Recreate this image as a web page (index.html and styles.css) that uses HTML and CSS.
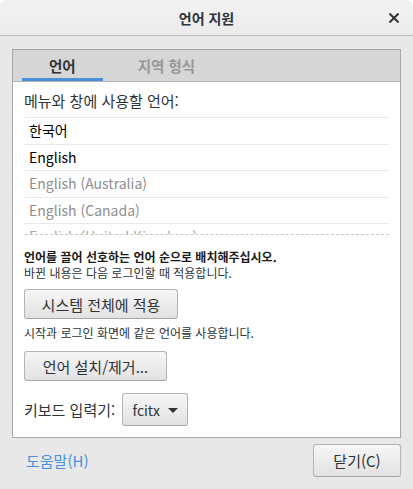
FILE: index.html
```html
<!DOCTYPE html>
<html lang="ko">
<head>
<meta charset="utf-8">
<link rel="stylesheet" href="styles.css">
</head>
<body>
<div class="window">
  <div class="titlebar">
    <span class="title">언어 지원</span>
    <span class="close"><svg width="10" height="10" viewBox="0 0 10 10"><path d="M1.2 1.2L8.8 8.8M8.8 1.2L1.2 8.8" stroke="#2e3436" stroke-width="2" stroke-linecap="square"/></svg></span>
  </div>
  <div class="content">
    <div class="notebook">
      <div class="tabs">
        <div class="tab active">언어</div>
        <div class="tab">지역 형식</div>
      </div>
      <div class="page">
        <div class="label">메뉴와 창에 사용할 언어:</div>
        <div class="list">
          <div class="row">한국어</div>
          <div class="row">English</div>
          <div class="row dim">English (Australia)</div>
          <div class="row dim">English (Canada)</div>
          <div class="row dim last">English (United Kingdom)</div>
        </div>
        <div class="note">
          <div class="bold">언어를 끌어 선호하는 언어 순으로 배치해주십시오.</div>
          <div>바뀐 내용은 다음 로그인할 때 적용합니다.</div>
        </div>
        <div class="btnrow first"><button class="btn wide1">시스템 전체에 적용</button></div>
        <div class="note single">시작과 로그인 화면에 같은 언어를 사용합니다.</div>
        <div class="btnrow second"><button class="btn wide2">언어 설치/제거...</button></div>
        <div class="kbd">
          <span class="kbdlabel">키보드 입력기:</span>
          <button class="btn combo">fcitx <span class="arrow"></span></button>
        </div>
      </div>
    </div>
    <div class="footer">
      <span class="help">도움말(H)</span>
      <button class="btn closebtn">닫기(C)</button>
    </div>
  </div>
</div>
</body>
</html>
```
FILE: styles.css
```css
html, body {
  margin: 0;
  padding: 0;
  background: #ffffff;
}
body {
  font-family: "Noto Sans CJK KR", "Noto Sans", sans-serif;
  color: #2e3436;
}
.window {
  width: 413px;
  height: 489px;
  background: #e8e8e8;
  border-radius: 7px 7px 0 0;
  overflow: hidden;
  display: flex;
  flex-direction: column;
}
.titlebar {
  height: 35px;
  border-bottom: 1px solid #bcbcbc;
  background: linear-gradient(#f2f2f2, #ebebeb);
  display: flex;
  align-items: center;
  justify-content: center;
  position: relative;
}
.title {
  font-weight: bold;
  font-size: 14px;
  color: #2e3436;
  margin-top: 1px;
}
.close {
  position: absolute;
  right: 14px;
  top: 13px;
  width: 10px;
  height: 10px;
  display: flex;
}
.content {
  padding: 13px 12px 0 12px;
  display: flex;
  flex-direction: column;
}
.notebook {
  border: 1px solid #a8a8a8;
  background: #ffffff;
  display: flex;
  flex-direction: column;
}
.tabs {
  height: 31px;
  background: #d6d6d6;
  border-bottom: 1px solid #b4b4b4;
  display: flex;
  gap: 8px;
  padding-left: 9px;
}
.tab {
  padding: 0 27px;
  font-size: 14.5px;
  font-weight: bold;
  color: #979797;
  display: flex;
  align-items: center;
  box-sizing: border-box;
  border-bottom: 3px solid transparent;
  padding-top: 2px;
}
.tab.active {
  color: #2e3436;
  border-bottom-color: #4a90d9;
}
.page {
  padding: 9px 11px 11px 11px;
  display: flex;
  flex-direction: column;
}
.label {
  font-size: 15px;
  line-height: 20px;
  height: 20px;
  color: #2e3436;
}
.list {
  margin-top: 6px;
  height: 116px;
  overflow: hidden;
  border-top: 1px solid #e8e8e8;
  border-bottom: 1px dashed #c8c8c8;
  margin-left: 1px;
}
.row {
  line-height: 24px;
  font-size: 14px;
  padding-left: 4px;
  border-bottom: 1px solid #e8e8e8;
  color: #000000;
  box-sizing: border-box;
  height: 26.5px;
}
.row.dim {
  color: #8e8e8e;
}
.row.last {
  color: #aaaaaa;
}
.note {
  margin-top: 14px;
  font-size: 12px;
  line-height: 16px;
  color: #2e3436;
}
.note .bold {
  font-weight: bold;
  color: #1a1a1a;
}
.note.single {
  margin-top: 6px;
}
.btnrow {
  display: flex;
}
.btnrow.first {
  margin-top: 8px;
}
.btnrow.second {
  margin-top: 10px;
}
.btn {
  font-family: "Noto Sans CJK KR", "Noto Sans", sans-serif;
  font-size: 15px;
  color: #2e3436;
  border: 1px solid #b3b3b3;
  border-bottom-color: #a6a6a6;
  border-radius: 3px;
  background: linear-gradient(#f6f6f6, #e2e2e2);
  padding: 0;
  margin: 0;
  display: flex;
  align-items: center;
  justify-content: center;
  box-sizing: border-box;
}
.wide1 {
  width: 154px;
  height: 30px;
}
.wide2 {
  width: 143px;
  height: 30px;
}
.kbd {
  margin-top: 12px;
  display: flex;
  align-items: center;
  gap: 7px;
}
.kbdlabel {
  font-size: 15px;
}
.combo {
  width: 66px;
  height: 33px;
  gap: 8px;
  font-size: 14px;
}
.arrow {
  width: 0;
  height: 0;
  border-left: 5px solid transparent;
  border-right: 5px solid transparent;
  border-top: 5px solid #2e3436;
  margin-top: 1px;
}
.footer {
  margin-top: 6px;
  display: flex;
  align-items: center;
  justify-content: space-between;
}
.help {
  font-size: 15px;
  color: #4a90d9;
  margin-left: 14px;
}
.closebtn {
  width: 88px;
  height: 33px;
}
```
